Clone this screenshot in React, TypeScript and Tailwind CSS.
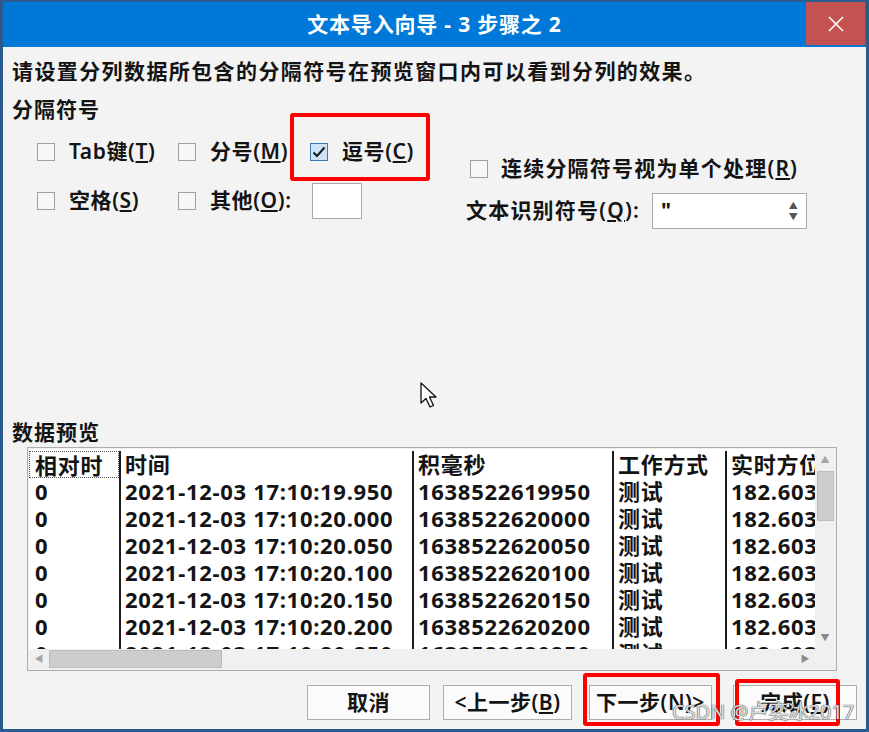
import React from "react";

const rows = [
  ["0", "2021-12-03 17:10:19.950", "1638522619950", "测试", "182.603"],
  ["0", "2021-12-03 17:10:20.000", "1638522620000", "测试", "182.603"],
  ["0", "2021-12-03 17:10:20.050", "1638522620050", "测试", "182.603"],
  ["0", "2021-12-03 17:10:20.100", "1638522620100", "测试", "182.603"],
  ["0", "2021-12-03 17:10:20.150", "1638522620150", "测试", "182.603"],
  ["0", "2021-12-03 17:10:20.200", "1638522620200", "测试", "182.603"],
  ["0", "2021-12-03 17:10:20.250", "1638522620250", "测试", "182.603"],
];

const headers = ["相对时", "时间", "积毫秒", "工作方式", "实时方位"];
const colClass = [
  "w-[92px] border-r-2 border-[#1c1c1c] pl-[6px]",
  "w-[293px] border-r-2 border-[#1c1c1c] pl-[4px]",
  "w-[200px] border-r-2 border-[#1c1c1c] pl-[4px]",
  "w-[113px] border-r-2 border-[#1c1c1c] pl-[4px]",
  "flex-1 pl-[4px]",
];

function Box({ checked = false }: { checked?: boolean }) {
  if (checked) {
    return (
      <span className="w-[18px] h-[18px] border border-[#3d7ab8] bg-[#cfe3f6] flex items-center justify-center shrink-0">
        <svg width="14" height="12" viewBox="0 0 14 12">
          <path d="M1.5 6.5 L5 10 L12.5 1.5" fill="none" stroke="#1a1a1a" strokeWidth="2" />
        </svg>
      </span>
    );
  }
  return <span className="w-[18px] h-[18px] border border-[#9f9f9f] bg-[#f7f7f7] shrink-0" />;
}

function Check({ label, k, tail = "", checked }: { label: string; k: string; tail?: string; checked?: boolean }) {
  return (
    <div className="flex items-center gap-[14px]">
      <Box checked={checked} />
      <span>
        {label}(<span className="underline underline-offset-2">{k}</span>){tail}
      </span>
    </div>
  );
}

export default function App() {
  return (
    <div className="relative w-[869px] h-[732px] overflow-hidden bg-[#f3f3f3] border-x-[3px] border-b-[3px] border-[#2b5b8c] flex flex-col font-['Noto_Sans','Noto_Sans_CJK_SC',sans-serif] text-[#141414]">
      {/* title bar */}
      <div className="h-[47px] shrink-0 flex bg-[#0078d7] border-t-2 border-[#2b5b8c]">
        <div className="w-[60px]" />
        <div className="flex-1 flex items-center justify-center text-white text-[21px] font-bold tracking-[0.8px]">
          文本导入向导 - 3 步骤之 2
        </div>
        <div className="w-[59px] h-[43px] mr-[1px] bg-[#c55252] flex items-center justify-center">
          <svg width="18" height="18" viewBox="0 0 18 18">
            <path d="M2 2 L16 16 M16 2 L2 16" stroke="#fff" strokeWidth="1.6" />
          </svg>
        </div>
      </div>

      <div className="flex-1 flex flex-col pl-[9px]">
        <div className="mt-[11px] text-[21px] leading-[26px] font-semibold tracking-[1.4px]">
          请设置分列数据所包含的分隔符号在预览窗口内可以看到分列的效果。
        </div>
        <div className="mt-[12px] text-[21px] leading-[26px] font-bold tracking-[1px]">分隔符号</div>

        {/* options */}
        <div className="mt-[12px] flex text-[21px] font-semibold tracking-[0.6px]">
          <div className="w-[454px] pl-[25px] grid grid-cols-[141px_132px_auto] grid-rows-[36px_36px] gap-y-[13px] items-center">
            <Check label="Tab键" k="T" />
            <Check label="分号" k="M" />
            <Check label="逗号" k="C" checked />
            <Check label="空格" k="S" />
            <div className="flex items-center gap-[20px] col-span-2">
              <Check label="其他" k="O" tail=":" />
              <span className="w-[50px] h-[36px] border border-[#a9a9a9] bg-white" />
            </div>
          </div>
          <div className="flex flex-col tracking-[1.2px]">
            <div className="mt-[17px] h-[36px] ml-[4px] flex items-center gap-[13px]">
              <Box />
              <span>
                连续分隔符号视为单个处理(<span className="underline underline-offset-2">R</span>)
              </span>
            </div>
            <div className="mt-[6px] h-[36px] flex items-center gap-[12px]">
              <span>
                文本识别符号(<span className="underline underline-offset-2">Q</span>):
              </span>
              <div className="w-[155px] h-[36px] border border-[#a9a9a9] bg-white flex items-center justify-between pl-[8px] pr-[7px]">
                <span className="font-bold">"</span>
                <div className="flex flex-col items-center text-[9px] leading-[11px] text-[#555]">
                  <span>▲</span>
                  <span>▼</span>
                </div>
              </div>
            </div>
          </div>
        </div>

        <div className="mt-[190px] text-[21px] leading-[26px] font-bold tracking-[1px]">数据预览</div>

        {/* preview table */}
        <div className="mt-[2px] ml-[15px] w-[810px] h-[224px] border border-[#adadad] p-[1px] grid grid-cols-[1fr_20px] grid-rows-[1fr_20px] bg-[#f0f0f0]">
          <div className="bg-white overflow-hidden flex pt-[2px] text-[22px] font-bold leading-[27px] tracking-[0.7px]">
            {headers.map((h, ci) => (
              <div key={h} className={`${colClass[ci]} flex flex-col whitespace-nowrap overflow-hidden`}>
                <div className={ci === 0 ? "h-[27px] -ml-[6px] pl-[5px] border border-dotted border-[#555] font-semibold" : "h-[27px] font-semibold"}>
                  {h}
                </div>
                {rows.map((r, ri) => (
                  <div key={ri} className="h-[27px]">
                    {r[ci]}
                  </div>
                ))}
              </div>
            ))}
          </div>
          {/* vertical scroll */}
          <div className="bg-[#f0f0f0] flex flex-col items-center">
            <div className="h-[22px] flex items-center text-[9px] text-[#a6a6a6]">▲</div>
            <div className="w-[17px] h-[50px] bg-[#cdcdcd] border border-[#bdbdbd]" />
            <div className="flex-1" />
            <div className="h-[22px] flex items-center text-[9px] text-[#8a8a8a]">▼</div>
          </div>
          {/* horizontal scroll */}
          <div className="bg-[#f0f0f0] flex items-center">
            <div className="w-[20px] flex justify-center text-[9px] text-[#a6a6a6]">◀</div>
            <div className="w-[173px] h-[18px] bg-[#cdcdcd] border border-[#bdbdbd]" />
            <div className="flex-1" />
            <div className="w-[20px] flex justify-center text-[9px] text-[#8a8a8a]">▶</div>
          </div>
          <div className="bg-[#f0f0f0]" />
        </div>

        {/* buttons */}
        <div className="mt-[14px] flex text-[21px] font-semibold tracking-[0.5px]">
          <button className="ml-[295px] w-[123px] h-[35px] border border-[#adadad] bg-[#fbfbfb]">取消</button>
          <button className="ml-[13px] w-[129px] h-[35px] border border-[#adadad] bg-[#fbfbfb]">
            &lt;上一步(<span className="underline underline-offset-2">B</span>)
          </button>
          <button className="ml-[17px] w-[123px] h-[35px] border border-[#adadad] bg-[#fbfbfb]">下一步(N)&gt;</button>
          <button className="ml-[21px] w-[124px] h-[35px] border border-[#adadad] bg-[#fbfbfb]">
            完成(<span className="underline underline-offset-2">F</span>)
          </button>
        </div>
      </div>

      {/* red annotation boxes */}
      <div className="absolute left-[287px] top-[113px] w-[140px] h-[68px] border-[4px] border-[#ff0000] rounded-[3px]" />
      <div className="absolute left-[580px] top-[673px] w-[137px] h-[53px] border-[4px] border-[#ff0000] rounded-[3px]" />
      <div className="absolute left-[732px] top-[679px] w-[105px] h-[47px] border-[4px] border-[#ff0000] rounded-[3px]" />

      {/* watermark */}
      <div className="absolute left-[669px] top-[698px] text-[20px] leading-[27px] text-[#dedede] [text-shadow:0_0_1px_#444,0_0_1px_#444]">
        CSDN @卢奕冰2017
      </div>

      {/* mouse pointer */}
      <svg className="absolute left-[417px] top-[382px]" width="20" height="28" viewBox="0 0 20 28">
        <path d="M1 1 L1 21 L6 16.5 L10 25 L13.5 23.5 L9.5 15 L16 15 Z" fill="#fff" stroke="#111" strokeWidth="1.3" strokeLinejoin="round" />
      </svg>
    </div>
  );
}
